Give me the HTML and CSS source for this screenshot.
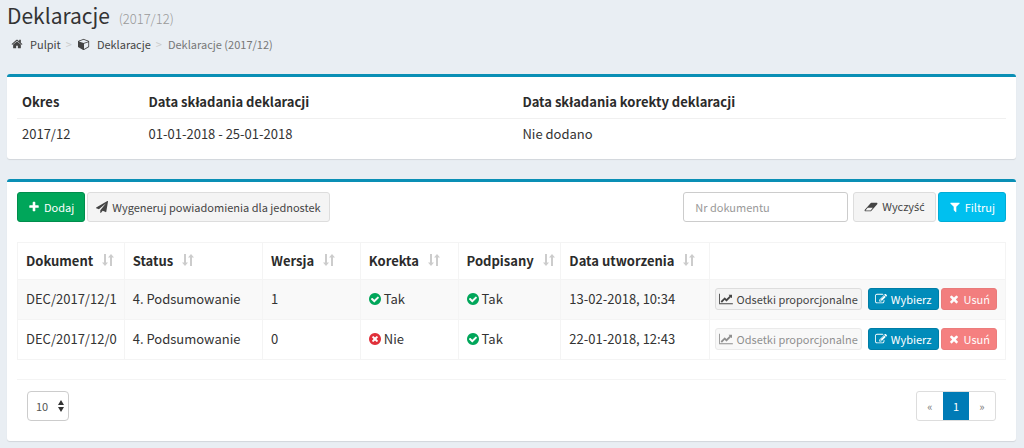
FILE: index.html
```html
<!DOCTYPE html>
<html lang="pl">
<head>
<meta charset="utf-8">
<meta name="viewport" content="width=device-width, initial-scale=1">
<title>Deklaracje (2017/12)</title>
<link rel="stylesheet" href="styles.css">
</head>
<body>
<svg class="sprite" aria-hidden="true">
  <symbol id="home" viewBox="0 0 1792 1792"><path d="M1472 992v480q0 26-19 45t-45 19h-384v-384h-256v384h-384q-26 0-45-19t-19-45v-480q0-1 .5-3t.5-3l575-474 575 474q1 2 1 6zm223-69l-62 74q-8 9-21 11h-3q-13 0-21-7l-692-577-692 577q-12 8-24 7-13-2-21-11l-62-74q-8-10-7-23.500t11-21.500l719-599q32-26 76-26t76 26l244 204v-195q0-14 9-23t23-9h192q14 0 23 9t9 23v408l219 182q10 8 11 21.500t-7 23.500z"/></symbol>
  <symbol id="cube" viewBox="0 0 1792 1792"><path d="M896 1629l640-349v-636l-640 233v752zm-64-865l698-254-698-254-698 254zm832-252v768q0 35-18 65t-49 47l-704 384q-28 16-61 16t-61-16l-704-384q-31-17-49-47t-18-65v-768q0-40 23-73t61-47l704-256q22-8 44-8t44 8l704 256q38 14 61 47t23 73z"/></symbol>
  <symbol id="plus" viewBox="0 0 1792 1792"><path d="M1600 736v192q0 40-28 68t-68 28h-416v416q0 40-28 68t-68 28h-192q-40 0-68-28t-28-68v-416h-416q-40 0-68-28t-28-68v-192q0-40 28-68t68-28h416v-416q0-40 28-68t68-28h192q40 0 68 28t28 68v416h416q40 0 68 28t28 68z"/></symbol>
  <symbol id="plane" viewBox="0 0 1792 1792"><path d="M1764 11q33 24 27 64l-256 1536q-5 29-32 45-14 8-31 8-11 0-24-5l-453-185-242 295q-18 23-49 23-13 0-22-4-19-7-30.500-23.500t-11.500-36.500v-349l864-1059-1069 925-395-162q-37-14-40-55-2-40 32-59l1664-960q15-9 32-9 20 0 36 11z"/></symbol>
  <symbol id="eraser" viewBox="0 0 2048 1792"><path d="M960 1408l336-384h-768l-336 384h768zm1013-1077q15 34 9.500 71.500t-30.500 65.500l-896 1024q-38 44-96 44h-768q-38 0-69.500-20.500t-47.500-54.500q-15-34-9.500-71.500t30.500-65.500l896-1024q38-44 96-44h768q38 0 69.500 20.500t47.500 54.500z"/></symbol>
  <symbol id="filter" viewBox="0 0 1792 1792"><path d="M1595 295q17 41-14 70l-493 493v742q0 42-39 59-13 5-25 5-27 0-45-19l-256-256q-19-19-19-45v-486l-493-493q-31-29-14-70 17-39 59-39h1280q42 0 59 39z"/></symbol>
  <symbol id="check" viewBox="0 0 1792 1792"><path d="M1412 734q0-28-18-46l-91-90q-19-19-45-19t-45 19l-408 407-226-226q-19-19-45-19t-45 19l-91 90q-18 18-18 46 0 27 18 45l362 362q19 19 45 19 27 0 46-19l543-543q18-18 18-45zm252 162q0 209-103 385.500t-279.500 279.500-385.500 103-385.500-103-279.500-279.500-103-385.500 103-385.500 279.500-279.500 385.500-103 385.500 103 279.500 279.500 103 385.500z"/></symbol>
  <symbol id="cross" viewBox="0 0 1792 1792"><path d="M1277 1122q0-26-19-45l-181-181 181-181q19-19 19-45 0-27-19-46l-90-90q-19-19-46-19-26 0-45 19l-181 181-181-181q-19-19-45-19-27 0-46 19l-90 90q-19 19-19 46 0 26 19 45l181 181-181 181q-19 19-19 45 0 27 19 46l90 90q19 19 46 19 26 0 45-19l181-181 181 181q19 19 45 19 27 0 46-19l90-90q19-19 19-46zm387-226q0 209-103 385.500t-279.500 279.500-385.500 103-385.500-103-279.500-279.500-103-385.500 103-385.500 279.500-279.500 385.500-103 385.500 103 279.500 279.500 103 385.500z"/></symbol>
  <symbol id="times" viewBox="0 0 1792 1792"><path d="M1490 1322q0 40-28 68l-136 136q-28 28-68 28t-68-28l-294-294-294 294q-28 28-68 28t-68-28l-136-136q-28-28-28-68t28-68l294-294-294-294q-28-28-28-68t28-68l136-136q28-28 68-28t68 28l294 294 294-294q28-28 68-28t68 28l136 136q28 28 28 68t-28 68l-294 294 294 294q28 28 28 68z"/></symbol>
  <symbol id="edit" viewBox="0 0 1792 1792"><path d="M888 1184l116-116-152-152-116 116v56h96v96h56zm440-720q-16-16-33 1l-350 350q-17 17-1 33t33-1l350-350q17-17 1-33zm80 594v190q0 119-84.500 203.500t-203.500 84.500h-832q-119 0-203.500-84.500t-84.500-203.500v-832q0-119 84.500-203.500t203.500-84.500h832q63 0 117 25 15 7 18 23 3 17-9 29l-49 49q-14 14-32 8-23-6-45-6h-832q-66 0-113 47t-47 113v832q0 66 47 113t113 47h832q66 0 113-47t47-113v-126q0-13 9-22l64-64q15-15 35-7t20 29zm-96-738l288 288-672 672h-288v-288zm444 132l-92 92-288-288 92-92q28-28 68-28t68 28l152 152q28 28 28 68t-28 68z"/></symbol>
  <symbol id="chart" viewBox="0 0 2048 1792"><path d="M2048 1536v128h-2048v-1536h128v1408h1920zm-128-1248v435q0 21-19.500 29.500t-35.500-7.500l-121-121-633 633q-10 10-23 10t-23-10l-233-233-416 416-192-192 585-585q10-10 23-10t23 10l233 233 464-464-121-121q-16-16-7.500-35.500t29.500-19.500h435q14 0 23 9t9 23z"/></symbol>
  <symbol id="sort" viewBox="0 0 12 12"><path d="M2 0h2v8.500h2L3 12 0 8.500h2zM8 12h2V3.500h2L9 0 6 3.500h2z"/></symbol>
  <symbol id="updown" viewBox="0 0 6 12"><path d="M3 0l3 5H0zM3 12l3-5H0z"/></symbol>
</svg>

<header class="page-header">
  <h1 class="title">Deklaracje <small class="subtitle">(2017/12)</small></h1>
  <nav aria-label="Ścieżka">
    <ol class="breadcrumb">
      <li><a href="#"><svg class="icon"><use href="#home"/></svg>Pulpit</a></li>
      <li><a href="#"><svg class="icon"><use href="#cube"/></svg>Deklaracje</a></li>
      <li class="current">Deklaracje (2017/12)</li>
    </ol>
  </nav>
</header>

<main class="content">
  <section class="box">
    <table class="summary">
      <colgroup><col class="s-period"><col class="s-date"><col></colgroup>
      <thead><tr><th>Okres</th><th>Data składania deklaracji</th><th>Data składania korekty deklaracji</th></tr></thead>
      <tbody><tr><td>2017/12</td><td>01-01-2018 - 25-01-2018</td><td>Nie dodano</td></tr></tbody>
    </table>
  </section>

  <section class="box">
    <div class="toolbar">
      <div class="group">
        <button type="button" class="btn success"><svg class="icon"><use href="#plus"/></svg>Dodaj</button>
        <button type="button" class="btn tight"><svg class="icon"><use href="#plane"/></svg>Wygeneruj powiadomienia dla jednostek</button>
      </div>
      <form class="group">
        <input class="search" type="text" placeholder="Nr dokumentu" aria-label="Nr dokumentu">
        <button type="reset" class="btn"><svg class="icon wide"><use href="#eraser"/></svg><span>Wyczy<span class="accented">ść</span></span></button>
        <button type="button" class="btn info"><svg class="icon"><use href="#filter"/></svg>Filtruj</button>
      </form>
    </div>

    <table class="grid">
      <colgroup><col class="c-doc"><col class="c-status"><col class="c-flag"><col class="c-flag"><col class="c-signed"><col class="c-date"><col></colgroup>
      <thead>
        <tr>
          <th>Dokument<svg class="sort"><use href="#sort"/></svg></th>
          <th>Status<svg class="sort"><use href="#sort"/></svg></th>
          <th>Wersja<svg class="sort"><use href="#sort"/></svg></th>
          <th>Korekta<svg class="sort"><use href="#sort"/></svg></th>
          <th>Podpisany<svg class="sort"><use href="#sort"/></svg></th>
          <th>Data utworzenia<svg class="sort"><use href="#sort"/></svg></th>
          <td></td>
        </tr>
      </thead>
      <tbody>
        <tr>
          <td>DEC/2017/12/1</td><td>4. Podsumowanie</td><td>1</td>
          <td><svg class="flag yes"><use href="#check"/></svg>Tak</td>
          <td><svg class="flag yes"><use href="#check"/></svg>Tak</td>
          <td>13-02-2018, 10:34</td>
          <td><div class="actions">
            <button type="button" class="btn small interest"><svg class="icon wide"><use href="#chart"/></svg>Odsetki proporcjonalne</button>
            <button type="button" class="btn small primary"><svg class="icon"><use href="#edit"/></svg>Wybierz</button>
            <button type="button" class="btn small danger" disabled><svg class="icon"><use href="#times"/></svg>Usuń</button>
          </div></td>
        </tr>
        <tr>
          <td>DEC/2017/12/0</td><td>4. Podsumowanie</td><td>0</td>
          <td><svg class="flag no"><use href="#cross"/></svg>Nie</td>
          <td><svg class="flag yes"><use href="#check"/></svg>Tak</td>
          <td>22-01-2018, 12:43</td>
          <td><div class="actions">
            <button type="button" class="btn small interest" disabled><svg class="icon wide"><use href="#chart"/></svg>Odsetki proporcjonalne</button>
            <button type="button" class="btn small primary"><svg class="icon"><use href="#edit"/></svg>Wybierz</button>
            <button type="button" class="btn small danger" disabled><svg class="icon"><use href="#times"/></svg>Usuń</button>
          </div></td>
        </tr>
      </tbody>
    </table>

    <footer class="table-footer">
      <div class="page-size">
        <select aria-label="Liczba wierszy"><option>10</option><option>25</option><option>50</option></select>
        <svg class="updown" aria-hidden="true"><use href="#updown"/></svg>
      </div>
      <nav class="pagination" aria-label="Strony">
        <a href="#" aria-label="Poprzednia">«</a><a href="#" class="active" aria-current="page">1</a><a href="#" aria-label="Następna">»</a>
      </nav>
    </footer>
  </section>
</main>
</body>
</html>
```
FILE: styles.css
```css
* { box-sizing: border-box; }

body {
  margin: 0;
  background: #e9eef3;
  color: #333;
  font-family: "Noto Sans CJK SC", "Noto Sans", sans-serif;
  font-size: 13px;
  line-height: 20px;
}

svg { fill: currentColor; flex: none; }
.sprite { display: none; }
button, input, select { font: inherit; color: inherit; }
a { color: inherit; text-decoration: none; }

.page-header { padding: 2px 7px 0; }
.title { margin: 0; font-size: 21px; line-height: 26px; font-weight: 400; }
.subtitle { margin-left: 4px; font-size: 13px; font-weight: 300; color: #999; }

.breadcrumb {
  display: flex;
  margin: 0;
  padding: 2px 4px 0;
  list-style: none;
  font-size: 11px;
}
.breadcrumb li, .breadcrumb a { display: flex; align-items: center; }
.breadcrumb a { color: #444; }
.breadcrumb .icon { margin-right: 7px; }
.breadcrumb li + li::before { content: ">"; padding: 0 6px 0 5px; color: #ccc; }
.breadcrumb .current { color: #777; }

.icon { width: 12px; height: 12px; margin-right: 4px; }
.icon.wide { width: 14px; }

.content { display: grid; gap: 20px; padding: 20px 8px 8px 7px; }
.box {
  padding: 10px;
  background: #fff;
  border-top: 3px solid #0a8fb5;
  border-radius: 3px;
  box-shadow: 0 1px 1px rgba(0, 0, 0, .1);
}

table { width: 100%; table-layout: fixed; border-collapse: collapse; }
th, td { text-align: left; vertical-align: middle; white-space: nowrap; }
th { font-weight: 700; color: #2b2b2b; }

.summary th { padding: 5px; height: 31px; }
.summary td { padding: 5px; height: 30px; }
.summary thead tr { border-bottom: 1px solid #f0f0f0; }
.s-period { width: 12.8%; }
.s-date { width: 37.8%; }

.toolbar { display: flex; justify-content: space-between; margin-bottom: 20px; }
.group { display: flex; gap: 2px; }

.btn {
  display: flex;
  align-items: center;
  justify-content: center;
  height: 30px;
  padding: 0 10px;
  border: 1px solid #ddd;
  border-radius: 3px;
  background: #f4f4f4;
  color: #444;
  font-size: 11px;
  line-height: 18px;
  white-space: nowrap;
}
.btn.tight { padding: 0 8px; }
.success { background: #00a65a; border-color: #008d4c; color: #fff; }
.info { background: #00c0ef; border-color: #00acd6; color: #fff; }
.primary { background: #008cba; border-color: #007da6; color: #fff; }
.danger { background: #ef2d2d; border-color: #e02828; color: #fff; }
.btn:disabled { opacity: .6; }
.btn.small { height: 22px; padding: 0 3px; }
.btn.primary.small, .btn.danger.small { padding: 0 6px; }
.interest { margin-right: 4px; }
.accented { font-family: "Noto Sans", sans-serif; }

.search {
  width: 165px;
  height: 30px;
  margin-right: 3px;
  padding: 0 11px;
  border: 1px solid #ccc;
  border-radius: 3px;
  background: #fff;
  font-size: 11px;
}
.search::placeholder { color: #999; opacity: 1; }

.grid th, .grid td { padding: 0 8px; border: 1px solid #f4f4f4; }
.grid thead th { height: 37px; }
.grid tbody td { height: 40px; }
.grid tbody tr:first-child { background: #f9f9f9; }
.c-doc { width: 10.8%; }
.c-status { width: 14%; }
.c-flag { width: 9.9%; }
.c-signed { width: 10.4%; }
.c-date { width: 15%; }
.sort { width: 12px; height: 12px; margin-left: 9px; color: #ccc; }
.flag { width: 14px; height: 14px; margin: 0 2px 0 -1px; vertical-align: -2px; }
.yes { color: #00a65a; }
.no { color: #e0303a; }
.actions { display: flex; justify-content: flex-end; gap: 2px; }

.table-footer {
  display: flex;
  justify-content: space-between;
  margin-top: 19px;
  padding: 11px 10px 10px;
  border-top: 1px solid #f4f4f4;
}
.page-size { display: grid; align-items: center; width: 42px; }
.page-size select, .updown { grid-area: 1 / 1; }
.page-size select {
  height: 30px;
  padding: 0 8px;
  border: 1px solid #ccc;
  border-radius: 4px;
  background: #fff;
  color: #555;
  font-size: 11px;
  appearance: none;
}
.updown { width: 6px; height: 12px; margin-right: 5px; justify-self: end; pointer-events: none; }

.pagination { display: flex; border: 1px solid #ddd; border-radius: 3px; font-size: 11px; line-height: 28px; }
.pagination a { width: 26px; text-align: center; color: #777; }
.pagination .active { background: #007bb6; color: #fff; }
```
